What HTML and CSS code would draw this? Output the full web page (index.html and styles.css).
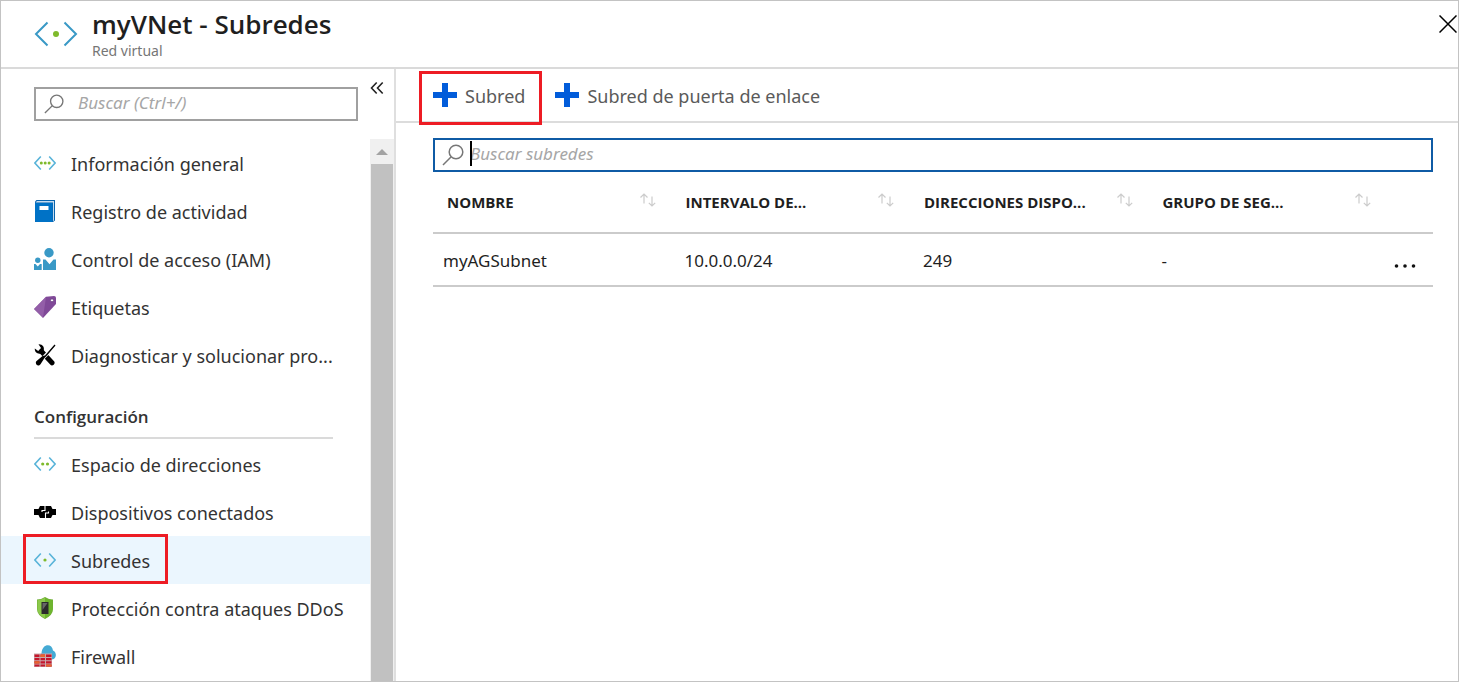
FILE: index.html
```html
<!DOCTYPE html>
<html lang="es">
<head>
<meta charset="utf-8">
<title>myVNet - Subredes</title>
<link rel="stylesheet" href="styles.css">
</head>
<body>
<svg class="sprite" aria-hidden="true">
  <symbol id="lens" viewBox="0 0 22 22"><circle cx="14" cy="8" r="6.8"/><path d="M9.200 12.800 1 21"/></symbol>
  <symbol id="sort" viewBox="0 0 18 14"><path d="M5 10.500V1M1.500 4.500 5 1l3.500 3.500M13 3.500V13M9.800 9.800 13 13l3.200-3.200"/></symbol>
  <symbol id="plus" viewBox="0 0 24 24"><path d="M9 0h6v9h9v6h-9v9H9v-9H0V9h9z"/></symbol>
  <symbol id="angles" viewBox="0 0 22 22"><path d="M6.800 4.500.9 11l5.900 6.500M15.200 4.500l5.900 6.500-5.900 6.500"/></symbol>
</svg>
<div class="blade">
  <header class="blade-header">
    <svg class="blade-logo" viewBox="0 0 44 28"><path d="M13.500 2.500 2 14l11.500 11.500M30.500 2.500 42 14 30.500 25.500"/><circle cx="22" cy="14" r="3"/></svg>
    <div class="blade-titles">
      <h1 class="blade-title">myVNet - Subredes</h1>
      <p class="blade-subtitle">Red virtual</p>
    </div>
    <button class="blade-close" type="button" aria-label="Cerrar"><svg viewBox="0 0 18 18"><path d="M.5.5l17 17M17.500.5.5 17.500"/></svg></button>
  </header>
  <div class="blade-body">
    <aside class="sidebar">
      <div class="sidebar-top">
        <label class="search sidebar-search">
          <svg class="search-icon"><use href="#lens"/></svg>
          <input class="search-input" type="text" placeholder="Buscar (Ctrl+/)" aria-label="Buscar en el menú">
        </label>
        <button class="collapse" type="button" aria-label="Contraer menú"><svg viewBox="0 0 14 14"><path d="M6.700 1.500 1.500 7l5.200 5.500M12.700 1.500 7.500 7l5.200 5.500"/></svg></button>
      </div>
      <div class="sidebar-scroll">
        <nav class="menu">
          <a class="menu-item" href="#general">
            <svg class="menu-icon vnet" viewBox="0 0 22 22"><use href="#angles"/><circle cx="7.300" cy="11" r="1.500"/><circle cx="11.200" cy="11" r="1.500"/><circle cx="15.100" cy="11" r="1.500"/></svg>
            <span class="menu-label">Información general</span></a>
          <a class="menu-item" href="#registro">
            <svg class="menu-icon" viewBox="0 0 22 22"><path fill="#0a64ad" d="M2.500 0H21v20.500l-2 1.500H1V1.500z"/><path fill="#c5dcf0" d="M3 1h17v19.500l-1 .7V2.500H1.500z"/><path fill="#0072c6" d="M1 3h17.500v19H2l-1-1z"/><path fill="#fff" d="M5.500 6h9v4h-9z"/></svg>
            <span class="menu-label">Registro de actividad</span></a>
          <a class="menu-item" href="#iam">
            <svg class="menu-icon" viewBox="0 0 22 22"><g fill="#3999c6"><circle cx="15" cy="4.700" r="4.700"/><circle cx="3.800" cy="12.300" r="2.700"/><path d="M9 11.500h2.500l4 4.700 4-4.700H22V22H9zM0 16h1.500l2.300 2.500L6 16h1.700v6H0z"/></g></svg>
            <span class="menu-label">Control de acceso (IAM)</span></a>
          <a class="menu-item" href="#etiquetas">
            <svg class="menu-icon" viewBox="0 0 22 22"><path fill="#804998" d="M12 .8 20 0q2 0 2 2v6L9 22 0 13z"/><path fill="#9a65ad" d="M12 .8 0 13l9 8.500z" opacity=".75"/><circle cx="18" cy="4.300" r="1.500" fill="#fff" stroke="#5c2d78" stroke-width=".7"/></svg>
            <span class="menu-label">Etiquetas</span></a>
          <a class="menu-item" href="#diagnosticar">
            <svg class="menu-icon" viewBox="0 0 22 22"><path fill="none" stroke="#000" stroke-width="5" stroke-linecap="round" d="M7.500 7.500 18 18.800"/><path d="M4.500.3c4-.3 6.500 3.200 5 6.700L7 9.500C3.500 10.500.5 8 .8 4.500L4.200 7 7 4z"/><path fill="none" stroke="#fff" stroke-width="3.600" d="m8 15 8-8"/><path d="m20.500.5 1 1-8.500 10-2.500 2.500-4 6.200c-2.300 3.200-6-.2-4.200-3l6.200-5.200 2.500-.5z"/></svg>
            <span class="menu-label">Diagnosticar y solucionar pro...</span></a>
          <h2 class="menu-heading">Configuración</h2>
          <a class="menu-item" href="#espacio">
            <svg class="menu-icon vnet" viewBox="0 0 22 22"><use href="#angles"/><circle cx="8.700" cy="11" r="1.600"/><circle cx="13.500" cy="11" r="1.600"/></svg>
            <span class="menu-label">Espacio de direcciones</span></a>
          <a class="menu-item" href="#dispositivos">
            <svg class="menu-icon" viewBox="0 0 22 22"><path d="M0 8h4.500L6 5h11l1.500 3H22v6h-3.500L17 17H6l-1.500-3H0z"/><path fill="none" stroke="#fff" stroke-width="1.100" d="M11 5v4.500H8V11M11.500 17v-5h3v-1.500"/></svg>
            <span class="menu-label">Dispositivos conectados</span></a>
          <a class="menu-item menu-item-active callout" href="#subredes" aria-current="page">
            <svg class="menu-icon vnet" viewBox="0 0 22 22"><use href="#angles"/><circle cx="11" cy="11" r="1.600"/></svg>
            <span class="menu-label">Subredes</span></a>
          <a class="menu-item" href="#ddos">
            <svg class="menu-icon" viewBox="0 0 22 22"><path fill="#6fae35" d="M11 0q4 2.500 8 2.500V12q0 6-8 10-8-4-8-10V2.500Q7 2.500 11 0z"/><path fill="#8cc94b" d="M11 .8Q7.500 3 3.500 3.200V12q0 5.500 7.500 9.500z"/><path fill="#6eb52e" d="M11 .8q3.500 2.200 7.500 2.400V12q0 5.500-7.500 9.500z"/><path fill="#2b2b2b" d="M7.500 5h7v12h-7z"/><path fill="#666" d="M8.500 6h5l-5 7z"/></svg>
            <span class="menu-label">Protección contra ataques DDoS</span></a>
          <a class="menu-item" href="#firewall">
            <svg class="menu-icon" viewBox="0 0 22 22"><path fill="#45aad4" d="M8 14.500c-4 0-4-5.500-.5-6C8-1.500 18-2 19 5.500c4 1.500 4 8.500-1 9z"/><path fill="#c9a9ad" d="M0 8.500h18V22H0z"/><path fill="#c4162b" d="M.5 9.500h5V12h-5zM6.500 9.500H11V12H6.500zM12 9.500h5.500V12H12zM.5 13h5v2.300h-5zM6.500 13H11v2.300H6.500zM12 13h5.500v2.300H12zM.5 16.200h5v2.300h-5zM6.500 16.200H11v2.300H6.500zM12 16.200h5.500v2.300H12zM.5 19.400h5v2h-5zM6.500 19.400H11v2H6.500zM12 19.400h5.500v2H12z"/><path fill="#e8642c" d="M6.500 9.500H11V12H6.500zM.5 16.200h5v2.300h-5zM12 19.400h5.500v2H12z"/></svg>
            <span class="menu-label">Firewall</span></a>
        </nav>
        <div class="scrollbar" aria-hidden="true"><span class="scroll-arrow"></span><span class="scroll-thumb"></span></div>
      </div>
    </aside>
    <main class="content">
      <div class="toolbar">
        <button class="command callout" type="button"><svg class="command-icon"><use href="#plus"/></svg>Subred</button>
        <button class="command" type="button"><svg class="command-icon"><use href="#plus"/></svg>Subred de puerta de enlace</button>
      </div>
      <div class="panel">
        <label class="search filter">
          <svg class="search-icon"><use href="#lens"/></svg>
          <span class="caret"></span>
          <input class="search-input" type="text" placeholder="Buscar subredes" aria-label="Buscar subredes">
        </label>
        <table class="grid">
          <colgroup><col class="col-data"><col class="col-data"><col class="col-data"><col class="col-data"><col></colgroup>
          <thead>
            <tr>
              <th scope="col"><div class="head">NOMBRE<svg class="sort"><use href="#sort"/></svg></div></th>
              <th scope="col"><div class="head">INTERVALO DE...<svg class="sort"><use href="#sort"/></svg></div></th>
              <th scope="col"><div class="head">DIRECCIONES DISPO...<svg class="sort"><use href="#sort"/></svg></div></th>
              <th scope="col"><div class="head">GRUPO DE SEG...<svg class="sort"><use href="#sort"/></svg></div></th>
              <th></th>
            </tr>
          </thead>
          <tbody>
            <tr>
              <td>myAGSubnet</td><td>10.0.0.0/24</td><td>249</td><td>-</td>
              <td class="cell-more"><button class="more" type="button" aria-label="Más opciones"><svg viewBox="0 0 22 6"><circle cx="2.500" cy="3" r="1.800"/><circle cx="11" cy="3" r="1.800"/><circle cx="19.500" cy="3" r="1.800"/></svg></button></td>
            </tr>
          </tbody>
        </table>
      </div>
    </main>
  </div>
</div>
</body>
</html>
```
FILE: styles.css
```css
*, *::before, *::after { box-sizing: border-box; }
body {
  margin: 0;
  font-family: "Noto Sans", "Open Sans", sans-serif;
  font-size: 18px;
  color: #1f1f1f;
  background: #fff;
}
button, input { font: inherit; color: inherit; border: 0; padding: 0; background: none; }
h1, h2, p { margin: 0; }
.sprite { position: absolute; width: 0; height: 0; }

.blade {
  display: flex;
  flex-direction: column;
  height: 100vh;
  border: 1px solid #c3c3c3;
  overflow: hidden;
}
.blade-header {
  display: flex;
  align-items: flex-start;
  flex: none;
  height: 68px;
  padding-left: 33px;
  border-bottom: 2px solid #dadada;
}
.blade-logo { width: 44px; height: 28px; margin-top: 19px; fill: none; stroke: #3999c6; stroke-width: 2; }
.blade-logo circle { fill: #7fba2c; stroke: none; }
.blade-titles { flex: 1; padding: 7px 0 0 14px; }
.blade-title { font-family: "Open Sans", "Noto Sans", sans-serif; font-size: 26px; line-height: 32px; font-weight: 600; }
.blade-subtitle { font-size: 14px; line-height: 21px; color: #767676; }
.blade-close { width: 19px; height: 18px; margin-top: 14px; }
.blade-close svg { display: block; width: 18px; height: 18px; fill: none; stroke: #000; stroke-width: 1.5; }

.blade-body { display: flex; flex: 1; min-height: 0; }

.sidebar { display: flex; flex-direction: column; flex: none; width: 395px; border-right: 2px solid #dfdfdf; }
.sidebar-top { display: flex; align-items: flex-start; height: 70px; padding: 18px 0 0 33px; }
.search { display: flex; align-items: center; position: relative; height: 34px; border: 2px solid #a0a0a0; }
.search-icon { flex: none; fill: none; stroke: #777; stroke-width: 1.5; }
.search-input { flex: 1; min-width: 0; padding-bottom: 3px; outline: 0; font-size: 17px; }
.search-input::placeholder { color: #a6a6a6; font-style: italic; opacity: 1; }
.sidebar-search { width: 324px; }
.sidebar-search .search-icon { width: 20px; height: 20px; margin: 0 14px 0 8px; }
.collapse { width: 14px; height: 14px; margin: -6px 0 0 12px; }
.collapse svg { display: block; width: 14px; height: 14px; fill: none; stroke: #222; stroke-width: 1.6; }

.sidebar-scroll { display: flex; flex: 1; min-height: 0; }
.menu { flex: 1; min-width: 0; overflow: hidden; }
.menu-item {
  display: flex;
  align-items: center;
  gap: 15px;
  position: relative;
  height: 48px;
  padding-left: 33px;
  color: #333;
  text-decoration: none;
  white-space: nowrap;
}
.menu-item-active { background: #ebf6fe; }
.menu-icon { flex: none; width: 22px; height: 22px; }
.vnet { fill: none; stroke: #59b4d9; stroke-width: 1.6; }
.vnet circle { fill: #7fba2c; stroke: none; }
.menu-label { padding-top: 1px; }
.menu-heading {
  height: 61px;
  margin: 0 37px 0 33px;
  padding-top: 25px;
  font-family: "Open Sans", "Noto Sans", sans-serif;
  font-size: 17px;
  line-height: 26px;
  font-weight: 600;
  color: #333;
  background: linear-gradient(#dadada, #dadada) 0 58px / 100% 2px no-repeat;
}
.scrollbar { display: flex; flex-direction: column; align-items: center; width: 24px; background: #f0f0f0; }
.scroll-arrow { height: 25px; padding-top: 10px; }
.scroll-arrow::before { content: ""; display: block; border: 6px solid transparent; border-top: 0; border-bottom-color: #a3a3a3; }
.scroll-thumb { flex: 1; width: 22px; background: #c1c1c1; }

.callout::after { content: ""; position: absolute; border: 3px solid #ed1c24; pointer-events: none; }
.menu-item.callout::after { left: 22px; top: -2px; width: 145px; height: 50px; }
.command.callout::after { inset: 2px -17px -2px -14px; }

.content { flex: 1; min-width: 0; }
.toolbar { display: flex; gap: 30px; height: 54px; padding-left: 37px; border-bottom: 2px solid #dcdcdc; }
.command { display: flex; align-items: center; gap: 8px; position: relative; height: 54px; color: #5a5a5a; white-space: nowrap; }
.command-icon { width: 24px; height: 24px; margin-bottom: 3px; fill: #015cda; }

.panel { padding: 15px 25px 0 37px; }
.filter { border-color: #0f5ba5; }
.filter .search-icon { width: 22px; height: 22px; margin: 0 6px 0 7px; }
.caret { position: absolute; left: 35px; top: 1px; width: 2px; height: 25px; background: #000; }

.grid { width: 100%; table-layout: fixed; border-collapse: collapse; }
.col-data { width: 23.850%; }
.grid tr { border-bottom: 2px solid #cbcbcb; }
.grid th {
  height: 61px;
  padding: 0 15px 0 14px;
  font-family: "Open Sans", "Noto Sans", sans-serif;
  font-size: 15px;
  font-weight: 700;
  text-align: left;
  white-space: nowrap;
}
.head { display: flex; align-items: center; justify-content: space-between; }
.sort { width: 18px; height: 14px; margin-bottom: 4px; fill: none; stroke: #ccc; stroke-width: 1.2; }
.grid td { height: 53px; padding: 1px 0 0 13px; font-size: 17px; }
.grid td:first-child { padding-left: 10px; }
.grid .cell-more { padding: 13px 17px 0 0; }
.more { display: block; margin-left: auto; }
.more svg { display: block; width: 22px; height: 6px; fill: #111; }
```
